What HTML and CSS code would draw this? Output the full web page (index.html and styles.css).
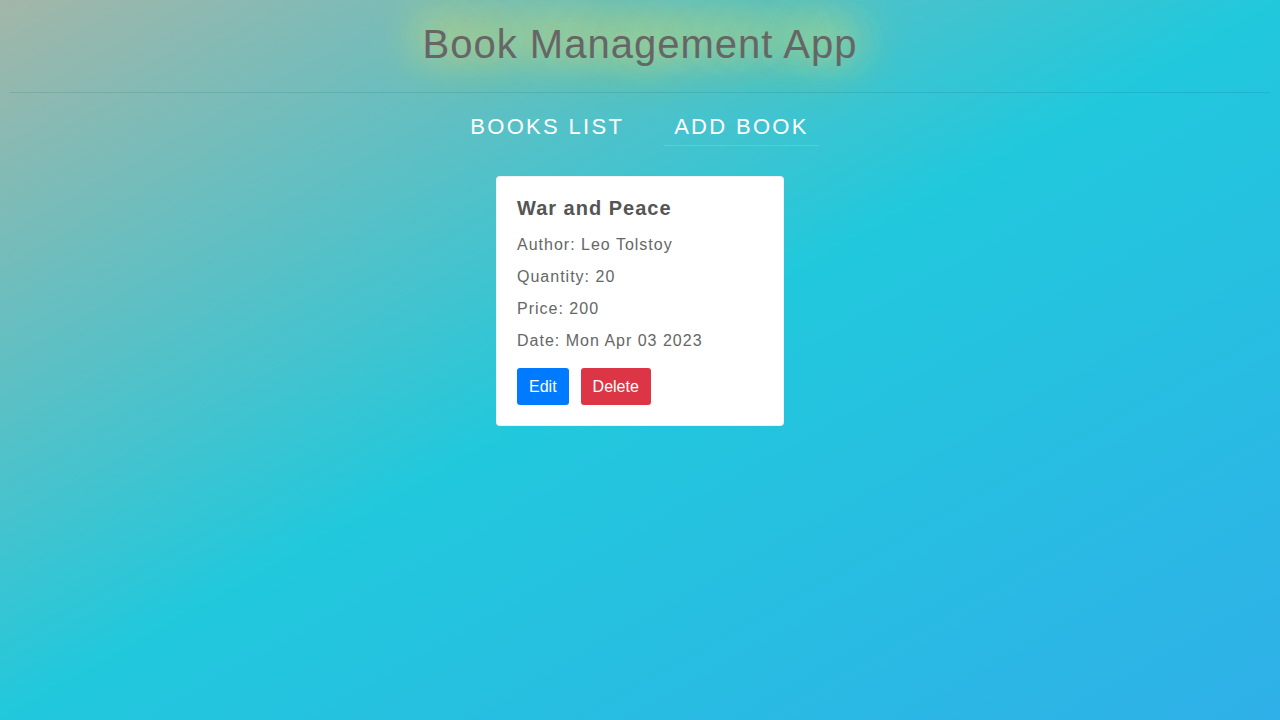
FILE: index.html
```html
<!DOCTYPE html>
<html lang="en">
<head>
<meta charset="utf-8">
<title>Book Management App</title>
<link rel="stylesheet" href="styles.css">
</head>
<body>
<div class="app">
  <header class="header">
    <h1 class="title">Book Management App</h1>
    <hr class="divider">
    <nav class="nav">
      <a class="nav-link" href="#">BOOKS LIST</a>
      <a class="nav-link active" href="#">ADD BOOK</a>
    </nav>
  </header>
  <main class="main">
    <div class="book-card">
      <h5 class="book-title">War and Peace</h5>
      <div class="book-details">
        <div class="detail">Author: Leo Tolstoy</div>
        <div class="detail">Quantity: 20</div>
        <div class="detail">Price: 200</div>
        <div class="detail">Date: Mon Apr 03 2023</div>
      </div>
      <div class="actions">
        <button class="btn btn-edit">Edit</button>
        <button class="btn btn-delete">Delete</button>
      </div>
    </div>
  </main>
</div>
</body>
</html>
```
FILE: styles.css
```css
html, body {
  margin: 0;
  padding: 0;
  height: 100%;
}
body {
  font-family: "Liberation Sans", Arial, sans-serif;
  background: linear-gradient(to bottom right, #a3b6a8 0%, #21c8dc 50%, #2fb0e8 100%);
  min-height: 100vh;
}
.app {
  display: flex;
  flex-direction: column;
  align-items: stretch;
}
.header {
  display: flex;
  flex-direction: column;
  align-items: center;
  padding-top: 20px;
}
.title {
  margin: 0;
  font-size: 40px;
  line-height: 48px;
  font-weight: normal;
  letter-spacing: 1px;
  color: #666;
  text-shadow: 0 -8px 40px #ebe26a, 0 -8px 50px #ebe26a, 0 -4px 60px rgba(230, 225, 120, 0.9);
}
.divider {
  align-self: stretch;
  margin: 24px 10px 0;
  border: 0;
  border-top: 1px solid rgba(0, 60, 80, 0.12);
  height: 0;
}
.nav {
  display: flex;
  gap: 30px;
  padding-top: 21px;
  margin-left: -1px;
}
.nav-link {
  color: #fff;
  text-decoration: none;
  font-size: 22px;
  line-height: 26px;
  letter-spacing: 2.3px;
  padding: 0 10px 5px;
  border-bottom: 1px solid transparent;
}
.nav-link.active {
  border-bottom-color: rgba(255, 255, 255, 0.15);
}
.main {
  display: flex;
  justify-content: center;
  padding-top: 30px;
}
.book-card {
  width: 246px;
  background: #fff;
  border: 1px solid rgba(0, 0, 0, 0.06);
  border-radius: 4px;
  padding: 19px 20px 20px;
  color: #666;
}
.book-title {
  margin: 0 0 13px;
  font-size: 20px;
  line-height: 24px;
  font-weight: bold;
  letter-spacing: 1px;
  color: #555;
}
.book-details {
  display: flex;
  flex-direction: column;
  gap: 8px;
}
.detail {
  font-size: 16px;
  line-height: 24px;
  letter-spacing: 1px;
}
.actions {
  display: flex;
  gap: 12px;
  margin-top: 15px;
}
.btn {
  font-family: "Liberation Sans", Arial, sans-serif;
  font-size: 16px;
  line-height: 23px;
  padding: 6px 11px;
  border: 1px solid transparent;
  border-radius: 3px;
  color: #fff;
  cursor: pointer;
}
.btn-edit {
  background: #007bff;
}
.btn-delete {
  background: #dc3545;
}
```
